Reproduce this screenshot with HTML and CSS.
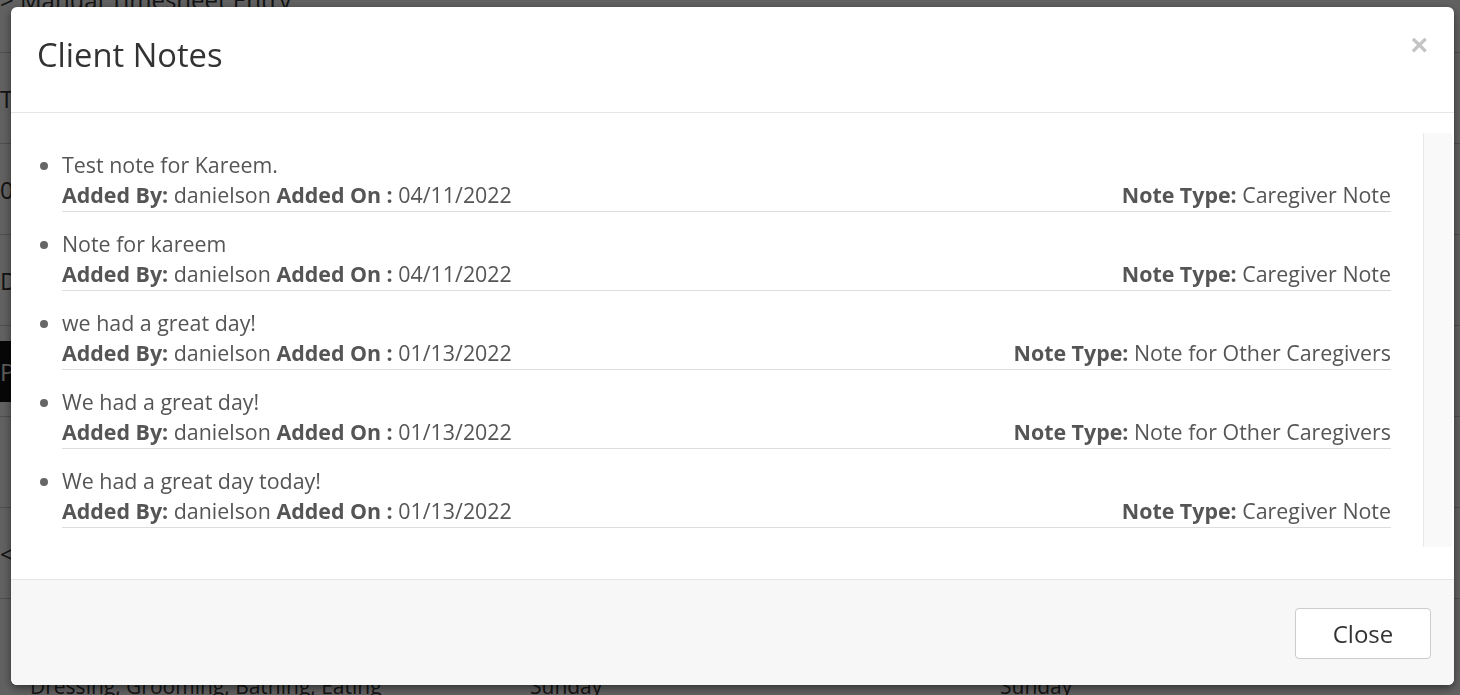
FILE: index.html
```html
<!DOCTYPE html>
<html lang="en">
<head>
    <meta charset="UTF-8">
    <meta name="viewport" content="width=device-width, initial-scale=1.0">
    <title>Client Notes</title>
    <link rel="stylesheet" href="styles.css">
</head>
<body>

    <!-- page behind the modal -->
    <div class="page">
        <div class="crumb">&gt; Manual Timesheet Entry</div>
        <div class="page-row"><span>Tra</span></div>
        <div class="page-row"><span>00</span></div>
        <div class="page-row"><span>Dur</span></div>
        <div class="page-row dark"><span>Pla 0/1</span></div>
        <div class="page-row"><span></span></div>
        <div class="page-row"><span>&lt;</span></div>
        <div class="page-bottom">
            <span>Dressing, Grooming, Bathing, Eating</span>
            <span>Sunday</span>
            <span>Sunday</span>
        </div>
    </div>

    <div class="backdrop"></div>

    <div class="modal">
        <div class="modal-header">
            <h4>Client Notes</h4>
            <button class="close-x" type="button">&times;</button>
        </div>

        <div class="modal-body">
            <div class="notes-scroll">
                <ul class="notes">
                    <li>
                        <div>Test note for Kareem.</div>
                        <div class="meta">
                            <span><b>Added By:</b> danielson <b>Added On :</b> 04/11/2022</span>
                            <span><b>Note Type:</b> Caregiver Note</span>
                        </div>
                    </li>
                    <li>
                        <div>Note for kareem</div>
                        <div class="meta">
                            <span><b>Added By:</b> danielson <b>Added On :</b> 04/11/2022</span>
                            <span><b>Note Type:</b> Caregiver Note</span>
                        </div>
                    </li>
                    <li>
                        <div>we had a great day!</div>
                        <div class="meta">
                            <span><b>Added By:</b> danielson <b>Added On :</b> 01/13/2022</span>
                            <span><b>Note Type:</b> Note for Other Caregivers</span>
                        </div>
                    </li>
                    <li>
                        <div>We had a great day!</div>
                        <div class="meta">
                            <span><b>Added By:</b> danielson <b>Added On :</b> 01/13/2022</span>
                            <span><b>Note Type:</b> Note for Other Caregivers</span>
                        </div>
                    </li>
                    <li>
                        <div>We had a great day today!</div>
                        <div class="meta">
                            <span><b>Added By:</b> danielson <b>Added On :</b> 01/13/2022</span>
                            <span><b>Note Type:</b> Caregiver Note</span>
                        </div>
                    </li>
                </ul>
                <div class="track"></div>
            </div>
        </div>

        <div class="modal-footer">
            <button class="btn" type="button">Close</button>
        </div>
    </div>

</body>
</html>
```

FILE: styles.css
```css
html, body {
    height: 100%;
}

body {
    margin: 0;
    font-family: "Open Sans", "Noto Sans", sans-serif;
    background: #fff;
    color: #333;
    overflow: hidden;
}

/* background page */
.page {
    height: 100%;
    display: flex;
    flex-direction: column;
}

.crumb {
    font-size: 24px;
    line-height: 24px;
    margin-top: -12px;
    padding-bottom: 40px;
    border-bottom: 1px solid #ccc;
}

.page-row {
    height: 90px;
    border-bottom: 1px solid #ccc;
    font-size: 24px;
    display: flex;
    align-items: center;
}

.page-row.dark span {
    background: #111;
    color: #eee;
    padding: 14px 0;
}

.page-bottom {
    display: grid;
    grid-template-columns: 500px 470px auto;
    padding-left: 30px;
    font-size: 21px;
    margin-top: auto;
    line-height: 18px;
}

.backdrop {
    position: fixed;
    inset: 0;
    background: rgba(0, 0, 0, 0.62);
}

/* modal */
.modal {
    position: fixed;
    left: 11px;
    top: 7px;
    width: 1443px;
    height: 678px;
    background: #fff;
    border-radius: 6px;
    box-shadow: 0 3px 9px rgba(0, 0, 0, 0.5);
    display: flex;
    flex-direction: column;
    overflow: hidden;
}

.modal-header {
    height: 106px;
    box-sizing: border-box;
    border-bottom: 1px solid #e5e5e5;
    display: flex;
    align-items: center;
    justify-content: space-between;
    padding: 0 26px 0 26px;
}

.modal-header h4 {
    margin: 0 0 10px 0;
    font-size: 32.7px;
    font-weight: 400;
    color: #333;
}

.close-x {
    border: none;
    background: none;
    padding: 0;
    font-size: 30px;
    font-weight: 700;
    line-height: 1;
    color: #c4c4c4;
    font-family: "Liberation Sans", sans-serif;
    margin-top: -30px;
}

.modal-body {
    padding: 20px 2px 32px 0;
}

.notes-scroll {
    display: flex;
    height: 414px;
}

.notes {
    flex: 1;
    margin: 0;
    padding: 17px 32px 0 51px;
    font-size: 21.4px;
    line-height: 30px;
    color: #555;
}

.notes li {
    padding-bottom: 1px;
    border-bottom: 1px solid #ddd;
    margin-bottom: 17px;
}

.notes li::marker {
    color: #666;
}

.notes b {
    font-weight: 700;
    color: #555;
}

.meta {
    display: flex;
    justify-content: space-between;
}

.track {
    width: 28px;
    background: #f9f9f9;
    border-left: 1px solid #e8e8e8;
}

.modal-footer {
    flex: 1;
    background: #f7f7f7;
    border-top: 1px solid #e5e5e5;
    display: flex;
    justify-content: flex-end;
    align-items: flex-start;
    padding: 28px 23px 0 0;
}

.btn {
    width: 136px;
    height: 51px;
    background: #fff;
    border: 1px solid #ccc;
    border-radius: 4px;
    font-family: "Open Sans", sans-serif;
    font-size: 24px;
    color: #333;
    cursor: pointer;
}
```
